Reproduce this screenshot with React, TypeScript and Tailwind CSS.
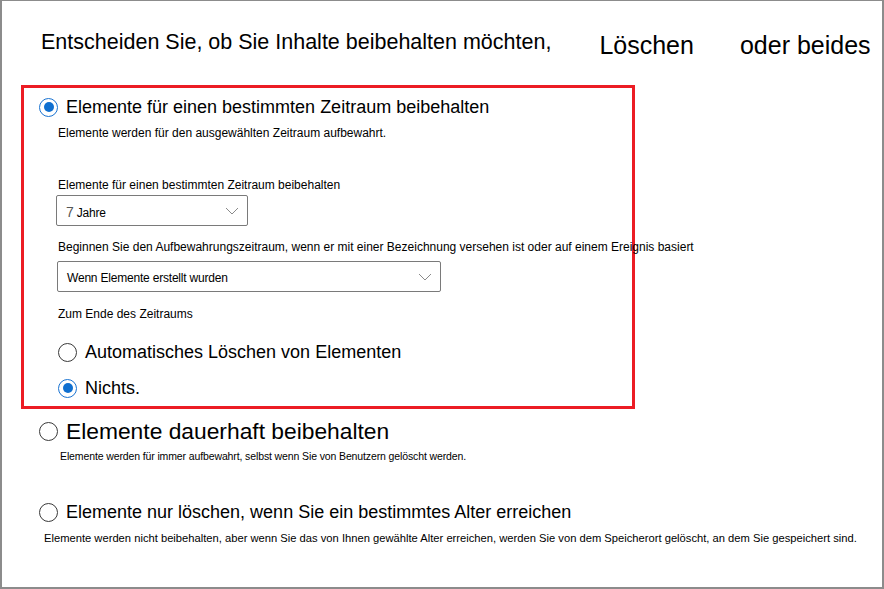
import React from "react";

const font = { fontFamily: '"Liberation Sans", Arial, sans-serif' };

type RadioProps = { checked?: boolean };

const Radio = ({ checked }: RadioProps) => (
  <span
    className={
      checked
        ? "flex h-[19px] w-[19px] shrink-0 items-center justify-center rounded-full border-[1.5px] border-[#1a73d1] bg-white"
        : "flex h-[19px] w-[19px] shrink-0 items-center justify-center rounded-full border-[1.5px] border-[#3a3a3a] bg-white"
    }
  >
    {checked && <span className="h-[10px] w-[10px] rounded-full bg-[#0f6fd0]" />}
  </span>
);

const Chevron = () => (
  <svg width="14" height="8" viewBox="0 0 14 8" className="shrink-0">
    <path d="M1 1 L7 7 L13 1" fill="none" stroke="#8a8a8a" strokeWidth="1" />
  </svg>
);

type DropdownProps = { width: string; children: React.ReactNode };

const Dropdown = ({ width, children }: DropdownProps) => (
  <div
    className={`flex h-[31px] items-center justify-between rounded-[2px] border border-[#7a7a7a] pl-[9px] pr-[8px] text-[12px] tracking-[-0.2px] text-black ${width}`}
  >
    <span className="pt-[3px]">{children}</span>
    <Chevron />
  </div>
);

export default function App() {
  return (
    <div
      className="h-[589px] w-[884px] overflow-hidden border-b-2 border-l-2 border-r-2 border-t border-[#8c8c8c] bg-white text-black"
      style={font}
    >
      {/* heading */}
      <div className="flex items-start whitespace-nowrap pl-[39px] pt-[26px]">
        <span className="text-[21.5px] leading-[30px]">Entscheiden Sie, ob Sie Inhalte beibehalten möchten,</span>
        <span className="ml-[48px] mt-[3px] text-[25px] leading-[30px]">Löschen</span>
        <span className="ml-[46px] mt-[3px] text-[25px] leading-[30px]">oder beides</span>
      </div>

      {/* option 1, framed */}
      <div className="ml-[19px] mt-[25px] h-[324px] w-[614px] border-[3px] border-[#ec1c24] pl-[15px] pt-[8px]">
        <div className="flex h-[22px] items-center gap-[8px]">
          <Radio checked />
          <span className="text-[18px] leading-[22px]">Elemente für einen bestimmten Zeitraum beibehalten</span>
        </div>
        <p className="ml-[19px] mt-[7px] text-[12px] leading-[16px]">
          Elemente werden für den ausgewählten Zeitraum aufbewahrt.
        </p>

        <div className="ml-[19px] text-[12px] leading-[16px]">
          <p className="mt-[36px]">Elemente für einen bestimmten Zeitraum beibehalten</p>
          <div className="ml-[-2px] mt-[2px]">
            <Dropdown width="w-[192px]">
              <span className="text-[14px] text-[#555]">7</span> Jahre
            </Dropdown>
          </div>

          <p className="mt-[13px] whitespace-nowrap">
            Beginnen Sie den Aufbewahrungszeitraum, wenn er mit einer Bezeichnung versehen ist oder auf einem Ereignis basiert
          </p>
          <div className="ml-[-1px] mt-[6px]">
            <Dropdown width="w-[384px]">Wenn Elemente erstellt wurden</Dropdown>
          </div>

          <p className="mt-[14px]">Zum Ende des Zeitraums</p>
        </div>

        <div className="ml-[19px] mt-[19px] flex h-[22px] items-center gap-[8px]">
          <Radio />
          <span className="text-[18px] leading-[22px]">Automatisches Löschen von Elementen</span>
        </div>
        <div className="ml-[19px] mt-[14px] flex h-[22px] items-center gap-[8px]">
          <Radio checked />
          <span className="text-[18px] leading-[22px]">Nichts.</span>
        </div>
      </div>

      {/* option 2 */}
      <div className="ml-[37px] mt-[9px] flex h-[26px] items-center gap-[8px]">
        <Radio />
        <span className="text-[22.8px] leading-[26px]">Elemente dauerhaft beibehalten</span>
      </div>
      <p className="ml-[58px] mt-[5px] text-[10.5px] leading-[14px] tracking-[-0.12px]">
        Elemente werden für immer aufbewahrt, selbst wenn Sie von Benutzern gelöscht werden.
      </p>

      {/* option 3 */}
      <div className="ml-[37px] mt-[38px] flex h-[22px] items-center gap-[8px]">
        <Radio />
        <span className="text-[18px] leading-[22px]">Elemente nur löschen, wenn Sie ein bestimmtes Alter erreichen</span>
      </div>
      <p className="ml-[42px] mt-[8px] whitespace-nowrap text-[11.2px] leading-[14px]">
        Elemente werden nicht beibehalten, aber wenn Sie das von Ihnen gewählte Alter erreichen, werden Sie von dem Speicherort gelöscht, an dem Sie gespeichert sind.
      </p>
    </div>
  );
}
